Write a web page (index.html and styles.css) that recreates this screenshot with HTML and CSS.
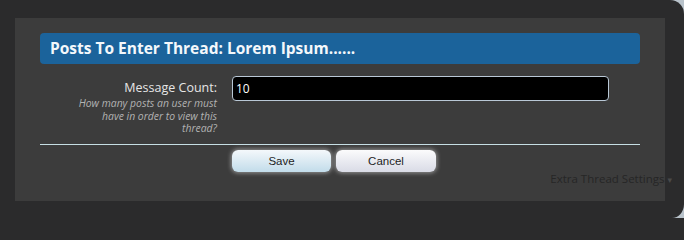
FILE: index.html
```html
<!DOCTYPE html>
<html>
<head>
<meta charset="utf-8">
<link rel="stylesheet" href="styles.css">
</head>
<body>
<div class="overlay">
  <div class="panel">
    <div class="header">Posts To Enter Thread: Lorem Ipsum......</div>
    <div class="row">
      <div class="label-col">
        <div class="label">Message Count:</div>
        <div class="hint">How many posts an user must<br>have in order to view this<br>thread?</div>
      </div>
      <div class="field"><input class="input" type="text" value="10"></div>
    </div>
    <div class="divider"></div>
    <div class="buttons">
      <button class="btn btn-save">Save</button>
      <button class="btn btn-cancel">Cancel</button>
    </div>
    <div class="extra">Extra Thread Settings <span class="arrow">▾</span></div>
  </div>
</div>
</body>
</html>
```
FILE: styles.css
```css
html {
  margin: 0;
  padding: 0;
  background: #2b2b2c;
}
body {
  margin: 0;
  padding: 0;
  width: 684px;
  height: 218px;
  overflow: hidden;
  background: #b9c3cb;
}
.overlay {
  width: 684px;
  height: 218px;
  box-sizing: border-box;
  background: #2b2b2c;
  border-radius: 0 14px 12px 0 / 0 14px 14px 0;
  padding: 18px 19px 0 15px;
}
.panel {
  height: 183px;
  box-sizing: border-box;
  background: #3c3c3c;
  padding: 15px 25px 0 25px;
}
.header {
  height: 31px;
  line-height: 31px;
  background: #1b639b;
  border-radius: 4px;
  color: #f4f8fb;
  font-family: "Open Sans", sans-serif;
  font-weight: bold;
  font-size: 15.5px;
  padding-left: 10px;
}
.row {
  display: flex;
  height: 68px;
  margin-top: 12px;
}
.label-col {
  width: 177px;
  text-align: right;
  font-family: "Open Sans", sans-serif;
}
.label {
  color: #e6e6e6;
  font-size: 12.5px;
  line-height: 18px;
  padding-top: 3px;
}
.hint {
  color: #b2b2b2;
  font-size: 10.4px;
  font-style: italic;
  line-height: 12.5px;
}
.field {
  padding-left: 15px;
}
.input {
  width: 377px;
  height: 25px;
  box-sizing: border-box;
  margin: 0;
  background: #000;
  color: #fff;
  border: 1px solid #b9c8d6;
  border-radius: 4px;
  padding: 0 3px;
  font-family: "Open Sans", sans-serif;
  font-size: 12px;
  outline: none;
}
.divider {
  height: 1px;
  background: #c6dee4;
}
.buttons {
  display: flex;
  gap: 5px;
  padding-left: 192px;
  margin-top: 5px;
}
.btn {
  width: 99px;
  height: 22px;
  margin: 0;
  padding: 0;
  border: none;
  border-radius: 6px;
  font-family: "Liberation Sans", sans-serif;
  font-size: 11.5px;
  color: #1e1e1e;
  box-shadow: 0 0 4px 1px rgba(255, 255, 255, 0.45);
}
.btn-save {
  background: linear-gradient(#f4f8fb, #c2dcea);
}
.btn-cancel {
  width: 100px;
  background: linear-gradient(#fbfbfc, #d9dbe6);
}
.extra {
  text-align: right;
  margin-top: -1px;
  margin-right: -32px;
  font-family: "Open Sans", sans-serif;
  font-size: 11.5px;
  color: #262626;
  white-space: nowrap;
}
.arrow {
  font-family: "DejaVu Sans", sans-serif;
  font-size: 9px;
  color: #4a4a4a;
}
```
